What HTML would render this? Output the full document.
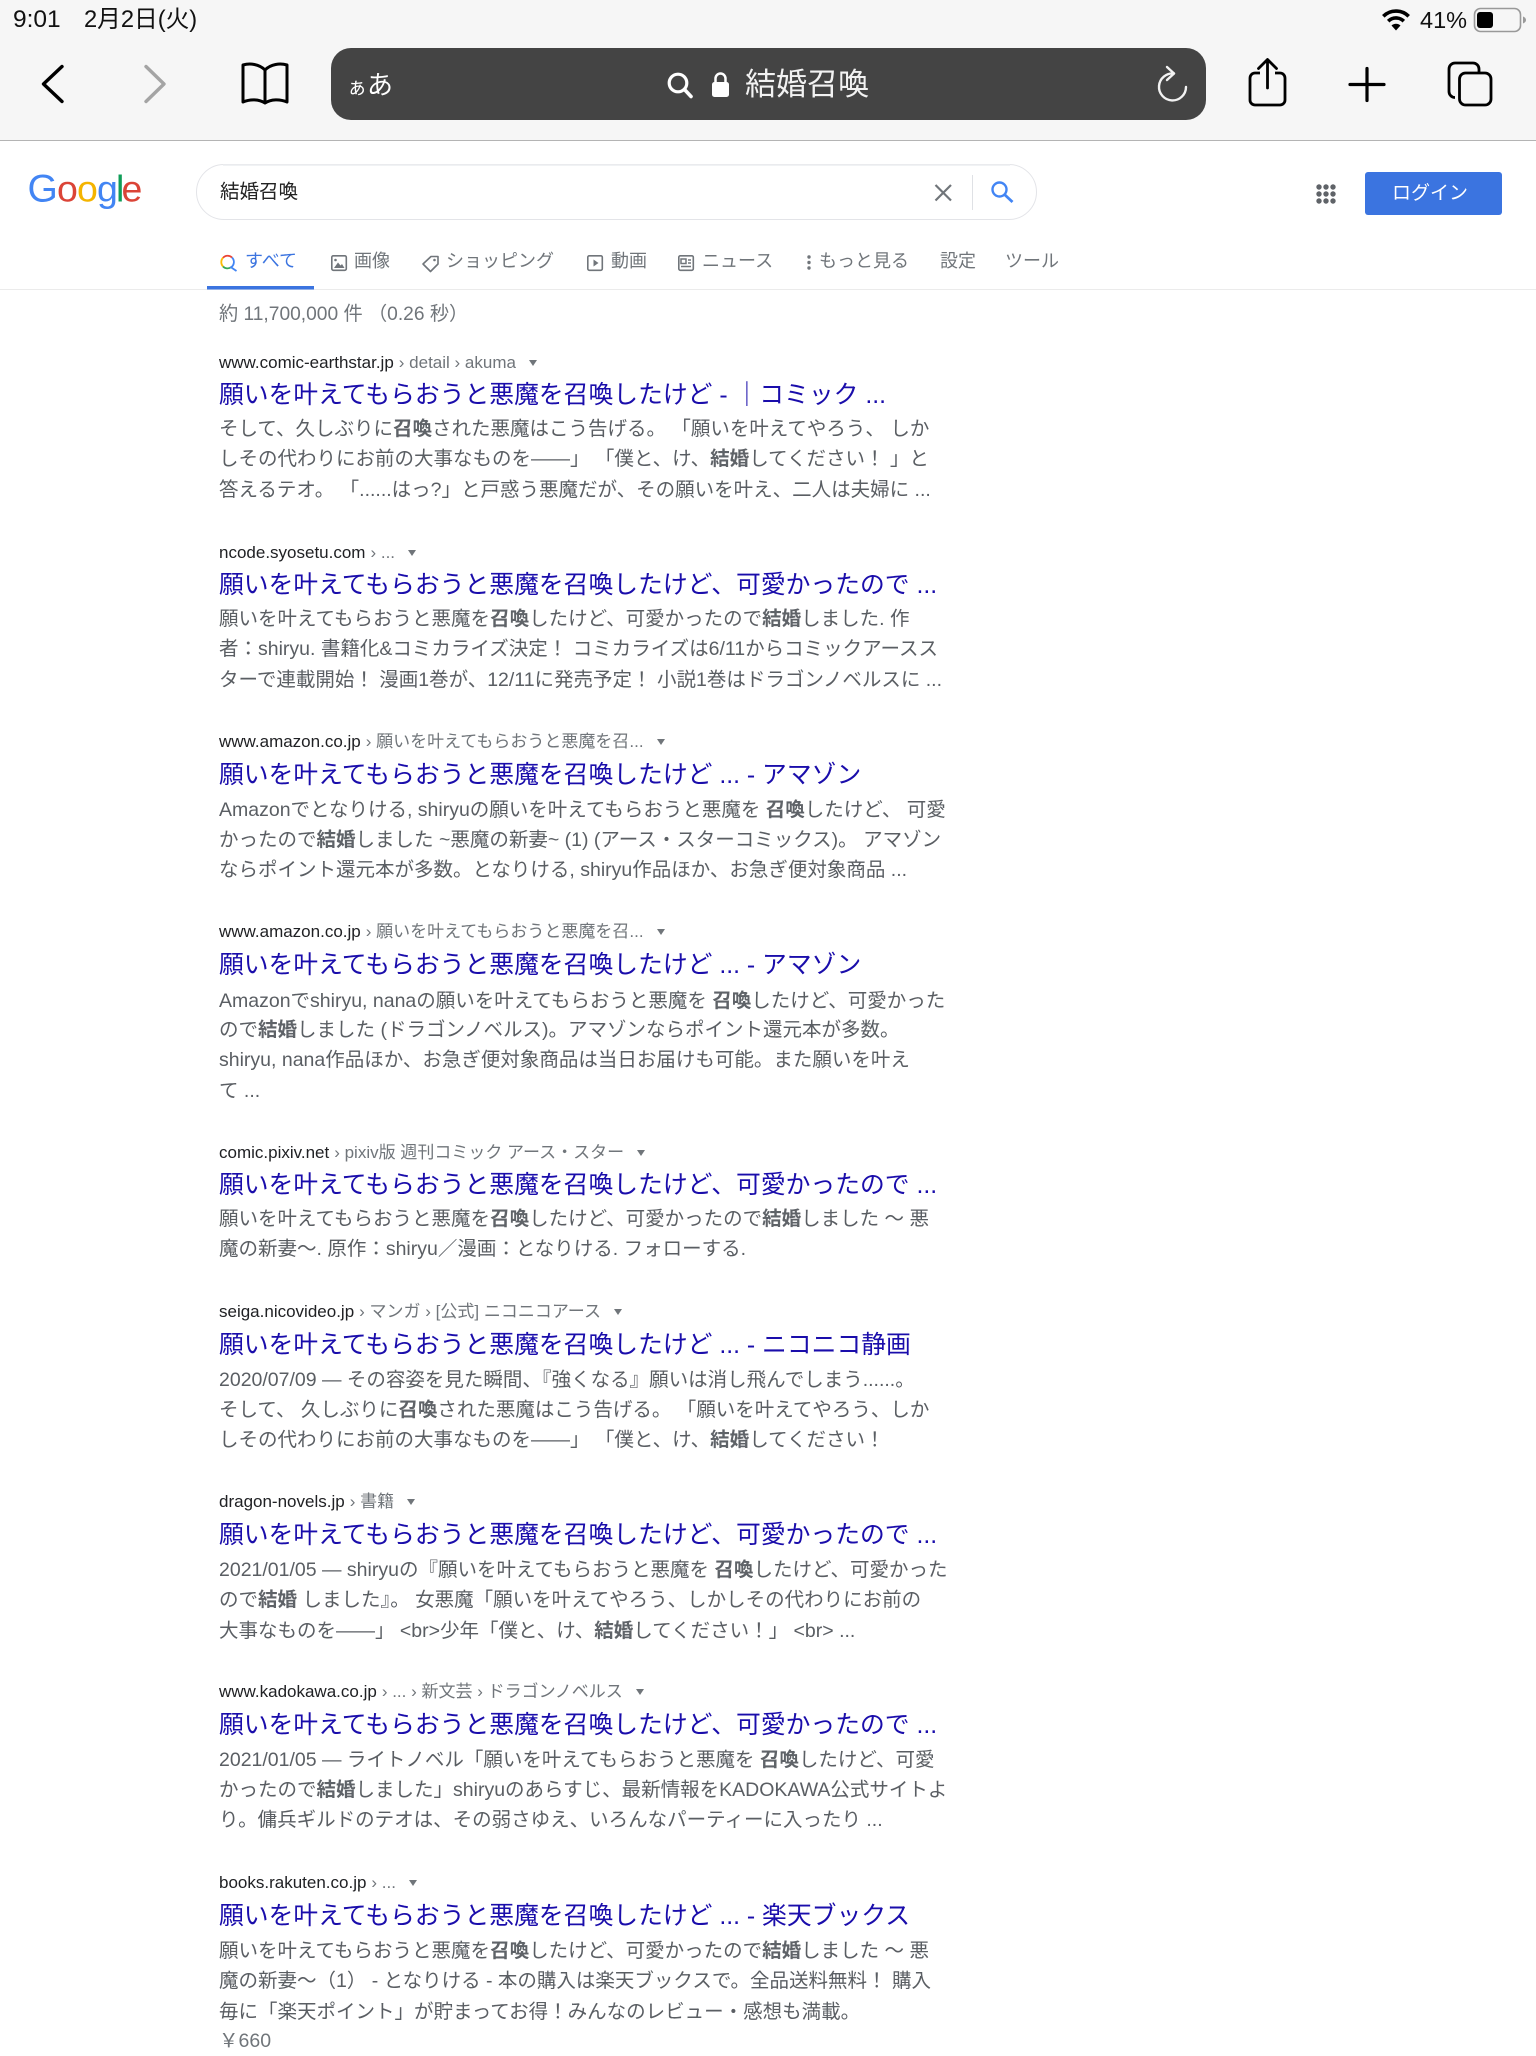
<!DOCTYPE html>
<html lang="ja"><head><meta charset="utf-8"><title>結婚召喚</title>
<style>
html,body{margin:0;padding:0;background:#fff}
body{position:relative;width:1536px;height:2048px;overflow:hidden;font-family:"Liberation Sans","Noto Sans CJK JP",sans-serif}
.a{position:absolute;white-space:nowrap}
.l{position:absolute;left:219px;white-space:nowrap;height:30px;line-height:30px;font-size:19.5px;color:#5a5e63}
.l b{font-weight:700;color:#5f6368}
.u{position:absolute;left:219px;white-space:nowrap;height:24px;line-height:24px;font-size:17px;color:#202124}
.u span{color:#70757a;margin-left:5px}
.u i{display:inline-block;width:0;height:0;border-left:4.5px solid transparent;border-right:4.5px solid transparent;border-top:6px solid #70757a;margin-left:13px;vertical-align:2px}
.t{position:absolute;left:219px;white-space:nowrap;height:34px;line-height:34px;font-size:24.8px;color:#1a0dab}
.n{position:absolute;top:249px;height:24px;line-height:24px;font-size:18px;color:#70757a;white-space:nowrap}
svg{position:absolute;left:0;top:0}
</style></head><body>
<div class="a" style="left:0;top:0;width:1536px;height:140px;background:#f6f6f6"></div>
<div class="a" style="left:0;top:140px;width:1536px;height:1px;background:#b4b4b4"></div>
<div class="a" style="left:13px;top:6px;height:28px;line-height:28px;font-size:24.5px;color:#111">9:01</div>
<div class="a" style="left:84px;top:6px;height:28px;line-height:28px;font-size:23.7px;color:#111">2月2日(火)</div>
<div class="a" style="left:1420px;top:6px;height:28px;line-height:28px;font-size:23.5px;color:#111">41%</div>
<div class="a" style="left:331px;top:48px;width:875px;height:72px;background:#444;border-radius:20px"></div>
<div class="a" style="left:347px;top:67px;height:36px;line-height:36px;font-size:26px;color:#fff"><span style="font-size:20px">ぁ</span>あ</div>
<div class="a" style="left:745px;top:65px;height:40px;line-height:40px;font-size:31px;color:#f2f2f2">結婚召喚</div>

<svg width="1536" height="300" viewBox="0 0 1536 300" fill="none">
<path d="M1383.300 16.300A18 18 0 0 1 1408.700 16.300M1388.200 21.200A11 11 0 0 1 1403.800 21.200" stroke="#000" stroke-width="3.600"/>
<path d="M1396 30.500L1391.500 25.500A6.500 6.500 0 0 1 1400.500 25.500Z" fill="#000"/>
<rect x="1474.500" y="8.500" width="46" height="23" rx="6" stroke="#999" stroke-width="1.600"/>
<rect x="1477" y="12" width="16" height="16" rx="3" fill="#000"/>
<path d="M1523 16.500c2 .8 3 2 3 3.500s-1 2.700-3 3.500z" fill="#999"/>
<path d="M62 66.500L43.500 84L62 101.500" stroke="#000" stroke-width="3.400" stroke-linecap="round" stroke-linejoin="round"/>
<path d="M146 66.500L164 84L146 101.500" stroke="#a4a4a4" stroke-width="3.400" stroke-linecap="round" stroke-linejoin="round"/>
<path d="M265 70C259 64 250 63 243 65V102C250 99 259 99 265 103C271 99 280 99 287 102V65C280 63 271 64 265 70ZM265 70V103" stroke="#000" stroke-width="3" stroke-linejoin="round"/>
<circle cx="678" cy="83" r="8.800" stroke="#fff" stroke-width="3.200"/>
<path d="M684.500 89.500L691 96.500" stroke="#fff" stroke-width="3.600" stroke-linecap="round"/>
<rect x="712" y="82" width="17" height="15" rx="2.500" fill="#fff"/>
<path d="M715.500 83v-4.500a5 5 0 0 1 10 0V83" stroke="#fff" stroke-width="2.500"/>
<path d="M1174 73.500A13.500 13.500 0 1 0 1186 87" stroke="#f2f2f2" stroke-width="2.400" stroke-linecap="round"/>
<path d="M1167 67L1174 73.500L1167 80" stroke="#f2f2f2" stroke-width="2.400" stroke-linecap="round" stroke-linejoin="round"/>
<path d="M1260 73H1255A5 5 0 0 0 1250 78V100A5 5 0 0 0 1255 105H1280A5 5 0 0 0 1285 100V78A5 5 0 0 0 1280 73H1275" stroke="#000" stroke-width="2.800"/>
<path d="M1267.500 88V60M1258.500 68.500L1267.500 59.500L1276.500 68.500" stroke="#000" stroke-width="2.800" stroke-linecap="round" stroke-linejoin="round"/>
<path d="M1367 68.500V100.500M1350 84.500H1384" stroke="#000" stroke-width="3.200" stroke-linecap="round"/>
<path d="M1455 97.500A6 6 0 0 1 1449 91.500V69A6 6 0 0 1 1455 63H1473A6 6 0 0 1 1479 69V72" stroke="#000" stroke-width="2.800"/>
<rect x="1459.500" y="73" width="31.500" height="32" rx="6" stroke="#000" stroke-width="2.800"/>
<g font-family="Liberation Sans" font-size="37.500">
<text x="27.500" y="201.500" font-size="39" fill="#4285f4">G</text>
<text x="57" y="201.500" fill="#db4437">o</text>
<text x="77" y="201.500" fill="#f4b400">o</text>
<text x="97" y="201.500" fill="#4285f4">g</text>
<text x="116" y="201.500" fill="#0f9d58">l</text>
<text x="121.500" y="201.500" fill="#db4437">e</text>
</g>
<rect x="196.500" y="164.500" width="840" height="55" rx="27.500" fill="#fff" stroke="#e3e4e8"/>
<path d="M223 165H1010" stroke="#ecedf0" stroke-width="1.500"/>
<path d="M935.500 185L951 200.500M951 185L935.500 200.500" stroke="#70757a" stroke-width="2.200"/>
<path d="M972.500 175V210" stroke="#dfe1e5"/>
<circle cx="999.500" cy="189.500" r="7" stroke="#4285f4" stroke-width="2.400"/>
<path d="M1004.500 194.500L1012.500 202" stroke="#4285f4" stroke-width="2.800"/>
<g fill="#5f6368">
<circle cx="1319" cy="187" r="2.700"/><circle cx="1326" cy="187" r="2.700"/><circle cx="1333" cy="187" r="2.700"/>
<circle cx="1319" cy="194" r="2.700"/><circle cx="1326" cy="194" r="2.700"/><circle cx="1333" cy="194" r="2.700"/>
<circle cx="1319" cy="201" r="2.700"/><circle cx="1326" cy="201" r="2.700"/><circle cx="1333" cy="201" r="2.700"/>
</g>
<rect x="1365" y="172" width="137" height="43" rx="3" fill="#3b74e0"/>
<path d="M0 289.500H1536" stroke="#ebebeb"/>
<rect x="207" y="286" width="107" height="3.500" fill="#3b74e0"/>
<path d="M232 257.500A6.300 6.300 0 0 0 223 257.800" stroke="#ea4335" stroke-width="1.800"/>
<path d="M223 257.800A6.300 6.300 0 0 0 223 266.500" stroke="#fbbc05" stroke-width="1.800"/>
<path d="M223 266.500A6.300 6.300 0 0 0 231 267.300" stroke="#34a853" stroke-width="1.800"/>
<path d="M232 257.500A6.300 6.300 0 0 1 231 267.300L236.500 271" stroke="#4285f4" stroke-width="1.800"/>
<g stroke="#70757a" stroke-width="1.600">
<rect x="331.800" y="255.800" width="14.500" height="14.500" rx="1.500"/>
<path d="M431 256.500H438V264L430.500 271.500L423 264Z" stroke-linejoin="round"/>
<rect x="587.800" y="255.800" width="14.500" height="14.500" rx="1.500"/>
<rect x="678.800" y="255.800" width="14.500" height="14.500" rx="1.500"/>
</g>
<path d="M334 268L338 262.500L340.500 265.500L342 264L344.500 268Z" fill="#70757a"/>
<circle cx="335.500" cy="260" r="1.300" fill="#70757a"/>
<circle cx="434.500" cy="260" r="1.300" fill="#70757a"/>
<path d="M593.500 259.500V266.500L598.500 263Z" fill="#70757a"/>
<path d="M681 259H686V263.500H681ZM688 260H691M688 263H691M681 266.500H691" stroke="#70757a" stroke-width="1.500"/>
<g fill="#70757a"><circle cx="809" cy="257" r="1.700"/><circle cx="809" cy="262.500" r="1.700"/><circle cx="809" cy="268" r="1.700"/></g>
</svg>

<div class="a" style="left:220px;top:179px;height:26px;line-height:26px;font-size:19.500px;color:#222">結婚召喚</div>
<div class="a" style="left:1392px;top:182px;height:24px;line-height:24px;font-size:19px;color:#fff">ログイン</div>
<div class="n" style="left:245px;color:#3b74e0">すべて</div>
<div class="n" style="left:354px">画像</div>
<div class="n" style="left:446px">ショッピング</div>
<div class="n" style="left:611px">動画</div>
<div class="n" style="left:702px">ニュース</div>
<div class="n" style="left:819px">もっと見る</div>
<div class="n" style="left:940px">設定</div>
<div class="n" style="left:1005px">ツール</div>

<div class="a" style="left:219px;top:303px;height:24px;line-height:24px;font-size:19.200px;color:#70757a">約 11,700,000 件 （0.26 秒）</div>

<div class="u" style="top:351px">www.comic-earthstar.jp<span>› detail › akuma</span><i></i></div>
<div class="t" style="top:379px">願いを叶えてもらおうと悪魔を召喚したけど - ｜コミック ...</div>
<div class="l" style="top:414px">そして、久しぶりに<b>召喚</b>された悪魔はこう告げる。 「願いを叶えてやろう、 しか</div>
<div class="l" style="top:444px">しその代わりにお前の大事なものを――」 「僕と、け、<b>結婚</b>してください！ 」と</div>
<div class="l" style="top:475px">答えるテオ。 「......はっ?」と戸惑う悪魔だが、その願いを叶え、二人は夫婦に ...</div>

<div class="u" style="top:541px">ncode.syosetu.com<span>› ...</span><i></i></div>
<div class="t" style="top:569px">願いを叶えてもらおうと悪魔を召喚したけど、可愛かったので ...</div>
<div class="l" style="top:604px">願いを叶えてもらおうと悪魔を<b>召喚</b>したけど、可愛かったので<b>結婚</b>しました. 作</div>
<div class="l" style="top:634px">者：shiryu. 書籍化&amp;コミカライズ決定！ コミカライズは6/11からコミックアースス</div>
<div class="l" style="top:665px">ターで連載開始！ 漫画1巻が、12/11に発売予定！ 小説1巻はドラゴンノベルスに ...</div>

<div class="u" style="top:730px">www.amazon.co.jp<span>› 願いを叶えてもらおうと悪魔を召...</span><i></i></div>
<div class="t" style="top:759px">願いを叶えてもらおうと悪魔を召喚したけど ... - アマゾン</div>
<div class="l" style="top:795px">Amazonでとなりける, shiryuの願いを叶えてもらおうと悪魔を <b>召喚</b>したけど、 可愛</div>
<div class="l" style="top:825px">かったので<b>結婚</b>しました ~悪魔の新妻~ (1) (アース・スターコミックス)。 アマゾン</div>
<div class="l" style="top:855px">ならポイント還元本が多数。となりける, shiryu作品ほか、お急ぎ便対象商品 ...</div>

<div class="u" style="top:920px">www.amazon.co.jp<span>› 願いを叶えてもらおうと悪魔を召...</span><i></i></div>
<div class="t" style="top:949px">願いを叶えてもらおうと悪魔を召喚したけど ... - アマゾン</div>
<div class="l" style="top:986px">Amazonでshiryu, nanaの願いを叶えてもらおうと悪魔を <b>召喚</b>したけど、可愛かった</div>
<div class="l" style="top:1015px">ので<b>結婚</b>しました (ドラゴンノベルス)。アマゾンならポイント還元本が多数。</div>
<div class="l" style="top:1045px">shiryu, nana作品ほか、お急ぎ便対象商品は当日お届けも可能。また願いを叶え</div>
<div class="l" style="top:1076px">て ...</div>

<div class="u" style="top:1141px">comic.pixiv.net<span>› pixiv版 週刊コミック アース・スター</span><i></i></div>
<div class="t" style="top:1169px">願いを叶えてもらおうと悪魔を召喚したけど、可愛かったので ...</div>
<div class="l" style="top:1204px">願いを叶えてもらおうと悪魔を<b>召喚</b>したけど、可愛かったので<b>結婚</b>しました ～ 悪</div>
<div class="l" style="top:1234px">魔の新妻～. 原作：shiryu／漫画：となりける. フォローする.</div>

<div class="u" style="top:1300px">seiga.nicovideo.jp<span>› マンガ › [公式] ニコニコアース</span><i></i></div>
<div class="t" style="top:1329px">願いを叶えてもらおうと悪魔を召喚したけど ... - ニコニコ静画</div>
<div class="l" style="top:1365px">2020/07/09 — その容姿を見た瞬間、『強くなる』願いは消し飛んでしまう......。</div>
<div class="l" style="top:1395px">そして、 久しぶりに<b>召喚</b>された悪魔はこう告げる。 「願いを叶えてやろう、しか</div>
<div class="l" style="top:1425px">しその代わりにお前の大事なものを――」 「僕と、け、<b>結婚</b>してください！</div>

<div class="u" style="top:1490px">dragon-novels.jp<span>› 書籍</span><i></i></div>
<div class="t" style="top:1519px">願いを叶えてもらおうと悪魔を召喚したけど、可愛かったので ...</div>
<div class="l" style="top:1555px">2021/01/05 — shiryuの『願いを叶えてもらおうと悪魔を <b>召喚</b>したけど、可愛かった</div>
<div class="l" style="top:1585px">ので<b>結婚</b> しました』。 女悪魔「願いを叶えてやろう、しかしその代わりにお前の</div>
<div class="l" style="top:1616px">大事なものを――」 &lt;br&gt;少年「僕と、け、<b>結婚</b>してください！」 &lt;br&gt; ...</div>

<div class="u" style="top:1680px">www.kadokawa.co.jp<span>› ... › 新文芸 › ドラゴンノベルス</span><i></i></div>
<div class="t" style="top:1709px">願いを叶えてもらおうと悪魔を召喚したけど、可愛かったので ...</div>
<div class="l" style="top:1745px">2021/01/05 — ライトノベル「願いを叶えてもらおうと悪魔を <b>召喚</b>したけど、可愛</div>
<div class="l" style="top:1775px">かったので<b>結婚</b>しました」shiryuのあらすじ、最新情報をKADOKAWA公式サイトよ</div>
<div class="l" style="top:1805px">り。傭兵ギルドのテオは、その弱さゆえ、いろんなパーティーに入ったり ...</div>

<div class="u" style="top:1871px">books.rakuten.co.jp<span>› ...</span><i></i></div>
<div class="t" style="top:1900px">願いを叶えてもらおうと悪魔を召喚したけど ... - 楽天ブックス</div>
<div class="l" style="top:1936px">願いを叶えてもらおうと悪魔を<b>召喚</b>したけど、可愛かったので<b>結婚</b>しました ～ 悪</div>
<div class="l" style="top:1966px">魔の新妻～（1） - となりける - 本の購入は楽天ブックスで。全品送料無料！ 購入</div>
<div class="l" style="top:1997px">毎に「楽天ポイント」が貯まってお得！みんなのレビュー・感想も満載。</div>
<div class="l" style="top:2026px;color:#70757a">￥660</div>
</body></html>
